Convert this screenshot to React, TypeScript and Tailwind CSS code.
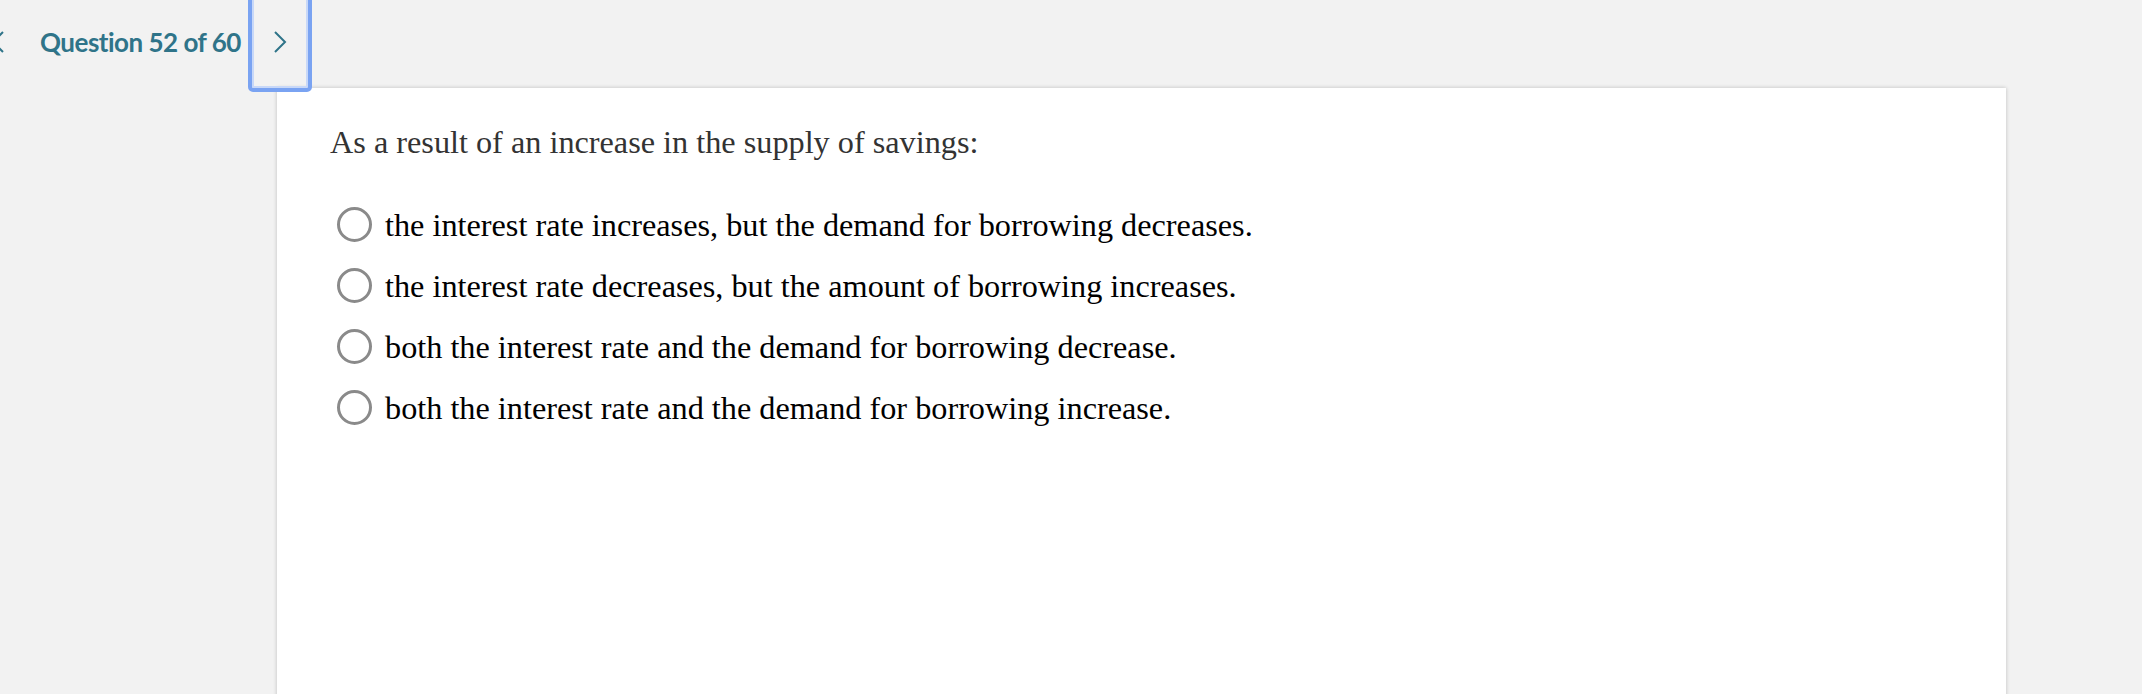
import React from 'react';

const options = [
  'the interest rate increases, but the demand for borrowing decreases.',
  'the interest rate decreases, but the amount of borrowing increases.',
  'both the interest rate and the demand for borrowing decrease.',
  'both the interest rate and the demand for borrowing increase.',
];

const Chevron = ({ left }: { left?: boolean }) => (
  <svg width="14" height="22" viewBox="0 0 14 22" fill="none">
    <path
      d={left ? 'M12 1 L2 11 L12 21' : 'M2 1 L12 11 L2 21'}
      stroke="#2f7489"
      strokeWidth="2"
    />
  </svg>
);

const App = () => {
  return (
    <div className="min-h-screen bg-[#f2f2f2] overflow-hidden">
      <div className="flex items-center h-[84px]">
        <div className="-ml-[9px] w-[14px] flex">
          <Chevron left />
        </div>
        <div className="ml-[35px] text-[26px] font-bold text-[#2f7489] font-['Lato','Open_Sans',sans-serif] tracking-[-0.5px]">
          Question 52 of 60
        </div>
        <button className="relative z-10 ml-[7px] w-[64px] h-[100px] flex items-center justify-center rounded-b-[5px] border-[4px] border-[#7aa3f2] shadow-[inset_0_0_0_2px_#c8d8f8]">
          <Chevron />
        </button>
      </div>

      <div className="mt-[4px] ml-[277px] w-[1729px] min-h-[640px] bg-white shadow-[0_0_4px_rgba(0,0,0,0.22)] pl-[53px] pt-[35px] font-['Liberation_Serif','Times_New_Roman',serif]">
        <p className="text-[32.25px] leading-[39px] text-[#333333]">
          As a result of an increase in the supply of savings:
        </p>
        <div className="mt-[32px] flex flex-col">
          {options.map((opt) => (
            <label key={opt} className="flex items-center h-[61px] pl-[7px] cursor-pointer">
              <span className="w-[35px] h-[35px] rounded-full border-[3px] border-[#8a8a8a] bg-white shrink-0" />
              <span className="ml-[13px] text-[32.25px] leading-[36px] text-black">{opt}</span>
            </label>
          ))}
        </div>
      </div>
    </div>
  );
};

export default App;
